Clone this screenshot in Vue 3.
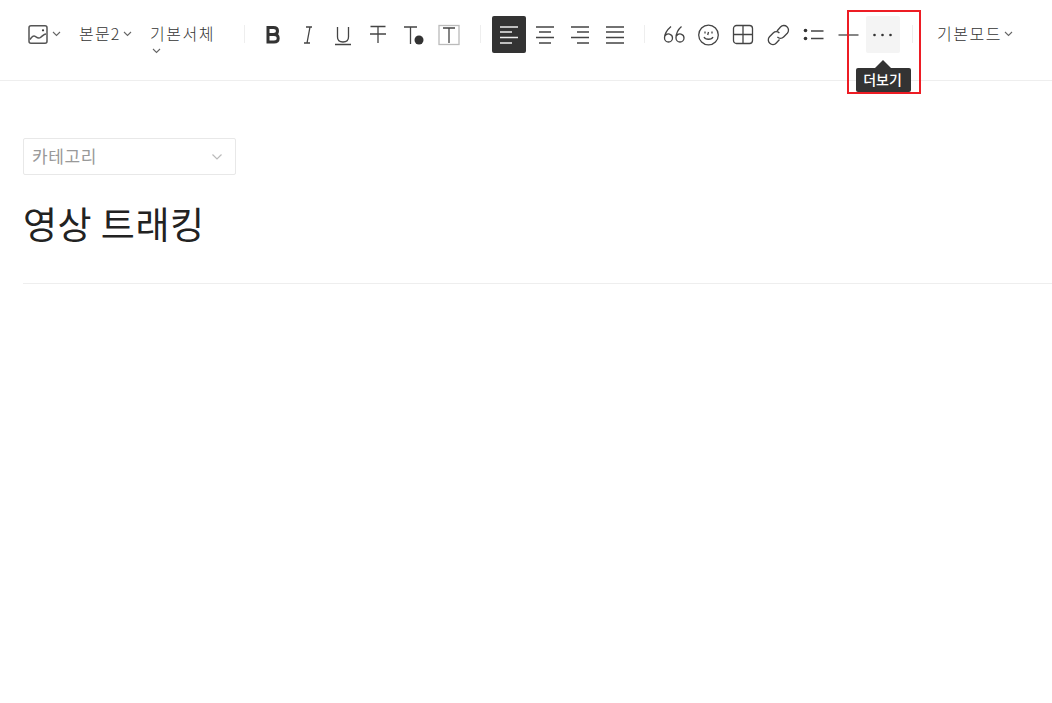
<template>
  <div class="editor">
    <header class="toolbar">
      <button class="drop image-drop">
        <svg class="icon image" width="24" height="24" viewBox="0 0 24 24">
          <rect x="3" y="3.800" width="18" height="17.500" rx="2" />
          <path d="M4 17.500c2-3 3.500-4.500 5.500-3s3 2.500 5 1 3.500-3.500 5.500-3.500" />
          <circle cx="17" cy="8.300" r="1.100" class="solid" />
        </svg>
        <svg class="chev" width="9" height="6" viewBox="0 0 9 6"><path d="M1 1l3.500 3.500L8 1" /></svg>
      </button>
      <button class="drop para-drop">
        <span>본문2</span>
        <svg class="chev" width="9" height="6" viewBox="0 0 9 6"><path d="M1 1l3.500 3.500L8 1" /></svg>
      </button>
      <button class="drop font-drop">
        <span>기본서체</span>
        <svg class="chev wrapped" width="9" height="6" viewBox="0 0 9 6"><path d="M1 1l3.500 3.500L8 1" /></svg>
      </button>
      <i class="divider first"></i>

      <div class="group">
        <button class="tool">
          <svg class="icon bold" width="24" height="24" viewBox="0 0 24 24">
            <path d="M6 4.500h5.500c2.500 0 4 1.300 4 3.600s-1.500 3.500-4 3.500H6zM6 11.600h6c2.600 0 4.200 1.400 4.200 3.700s-1.600 3.700-4.200 3.700H6z" />
          </svg>
        </button>
        <button class="tool">
          <svg class="icon" width="24" height="24" viewBox="0 0 24 24"><path d="M9 4h6M7 20h6M13 4l-3 16" /></svg>
        </button>
        <button class="tool">
          <svg class="icon" width="24" height="24" viewBox="0 0 24 24"><path d="M5.500 4v10c0 3.500 2 5 5.500 5s5.500-1.500 5.500-5V4M3 21.500h16" /></svg>
        </button>
        <button class="tool">
          <svg class="icon" width="24" height="24" viewBox="0 0 24 24"><path d="M3.500 3.500h15M3 11h16M11 3.500V20" /></svg>
        </button>
        <button class="tool">
          <svg class="icon" width="24" height="24" viewBox="0 0 24 24">
            <path d="M2 4h13M8.500 4v17" />
            <circle cx="17" cy="17" r="4.500" class="solid" />
          </svg>
        </button>
        <button class="tool">
          <svg class="icon" width="24" height="24" viewBox="0 0 24 24">
            <rect x="2" y="2.500" width="20" height="19" class="light" />
            <path d="M6 5h12M12 5v15" />
          </svg>
        </button>
      </div>
      <i class="divider second"></i>

      <div class="group">
        <button class="tool active">
          <svg class="icon" width="24" height="24" viewBox="0 0 24 24"><path d="M3 4h18M3 9h12M3 14.500h18M3 20h12" /></svg>
        </button>
        <button class="tool">
          <svg class="icon" width="24" height="24" viewBox="0 0 24 24"><path d="M3 4h18M6 9h12M3 14.500h18M6 20h12" /></svg>
        </button>
        <button class="tool">
          <svg class="icon" width="24" height="24" viewBox="0 0 24 24"><path d="M3 4h18M9 9h12M3 14.500h18M9 20h12" /></svg>
        </button>
        <button class="tool">
          <svg class="icon" width="24" height="24" viewBox="0 0 24 24"><path d="M3 4h18M3 9h18M3 14.500h18M3 20h18" /></svg>
        </button>
      </div>
      <i class="divider"></i>

      <div class="group">
        <button class="tool">
          <svg class="icon" width="24" height="24" viewBox="0 0 24 24">
            <path d="M9 3.500C5.500 6.500 2.500 10 2.500 15a4 4 0 1 0 8 0 4 4 0 0 0-7.500-2M19.500 3.500C16 6.500 14 10 14 15a4 4 0 1 0 8 0 4 4 0 0 0-7.500-2" />
          </svg>
        </button>
        <button class="tool">
          <svg class="icon" width="24" height="24" viewBox="0 0 24 24">
            <circle cx="11.500" cy="12" r="9.800" />
            <path d="M7 14c1.500 3 7.500 3 9 0M8 8.500v2M15 8.500v2M11.500 9l-.8 3" />
          </svg>
        </button>
        <button class="tool">
          <svg class="icon" width="24" height="24" viewBox="0 0 24 24">
            <rect x="1.500" y="2.500" width="19" height="18" rx="3" />
            <path d="M11 2.500v18M1.500 11.500h19" />
          </svg>
        </button>
        <button class="tool">
          <svg class="icon" width="24" height="24" viewBox="0 0 24 24">
            <path d="M10 8l3.500-4a4.600 4.600 0 0 1 6.800 6.200l-3.700 3.800a4.400 4.400 0 0 1-6.200 0" />
            <path d="M12.500 16.500l-3.200 3.500a4.600 4.600 0 0 1-6.800-6.200l3.700-3.800a4.400 4.400 0 0 1 6.200 0" />
          </svg>
        </button>
        <button class="tool">
          <svg class="icon" width="24" height="24" viewBox="0 0 24 24">
            <circle cx="3.500" cy="7.500" r="1.800" class="solid" />
            <circle cx="3.500" cy="15.500" r="1.800" class="solid" />
            <path d="M9 8h12.500M9 15.500h12.500" />
          </svg>
        </button>
        <button class="tool">
          <svg class="icon" width="24" height="24" viewBox="0 0 24 24"><path d="M1.500 12h20" /></svg>
        </button>
        <button class="tool hovered">
          <svg class="icon" width="24" height="24" viewBox="0 0 24 24">
            <circle cx="3.500" cy="12" r="1.300" class="solid" />
            <circle cx="11.500" cy="12" r="1.300" class="solid" />
            <circle cx="19.500" cy="12" r="1.300" class="solid" />
          </svg>
          <span class="tooltip">더보기</span>
        </button>
      </div>
      <i class="divider last"></i>

      <button class="drop mode-drop">
        <span>기본모드</span>
        <svg class="chev" width="9" height="6" viewBox="0 0 9 6"><path d="M1 1l3.500 3.500L8 1" /></svg>
      </button>

      <div class="highlight"></div>
    </header>

    <main class="content">
      <div class="category">
        <span>카테고리</span>
        <svg width="12" height="8" viewBox="0 0 12 8"><path d="M1.500 1.500L6 6l4.500-4.500" /></svg>
      </div>
      <h1 class="title">영상 트래킹</h1>
      <hr class="rule" />
    </main>
  </div>
</template>

<script setup>
</script>

<style>
html,
body {
  background: #fff;
}
</style>

<style scoped>
.editor {
  height: 703px;
  overflow: hidden;
  font-family: "Noto Sans CJK KR", "Liberation Sans", sans-serif;
  color: #333;
}

.toolbar {
  position: relative;
  display: flex;
  align-items: flex-start;
  padding: 16px 0 0 26px;
  height: 64px;
  border-bottom: 1px solid #eee;
}

button {
  border: 0;
  padding: 0;
  background: none;
  font: inherit;
  color: inherit;
}

.drop {
  display: flex;
  align-items: center;
  height: 36px;
  font-size: 16px;
  font-weight: 300;
  letter-spacing: 1.500px;
  color: #333;
}

.drop span {
  margin-bottom: 2px;
}

.image-drop {
  width: 53px;
}

.para-drop {
  width: 71px;
}

.para-drop span {
  letter-spacing: 1.200px;
}

.font-drop {
  position: relative;
  width: 94px;
}

.chev {
  margin-left: 2px;
  fill: none;
  stroke: #666;
  stroke-width: 1.100;
}

.chev.wrapped {
  position: absolute;
  left: 2px;
  top: 32px;
  margin-left: 0;
}

.divider {
  flex: none;
  width: 1px;
  height: 18px;
  margin: 9px 11px 0 12px;
  background: #eee;
}

.divider.first {
  margin-left: 0;
}

.divider.second {
  margin-left: 14px;
}

.divider.last {
  margin-left: 11px;
  margin-right: 24px;
}

.group {
  display: flex;
}

.tool {
  position: relative;
  display: flex;
  align-items: center;
  justify-content: center;
  width: 35px;
  height: 37px;
  border-radius: 2px;
}

.active,
.hovered {
  width: 34px;
  margin-right: 1px;
}

.icon {
  fill: none;
  stroke: #444;
  stroke-width: 1.300;
}

.icon.image {
  stroke: #555;
  stroke-width: 1.500;
}

.icon .solid {
  fill: #333;
  stroke: none;
}

.icon .light {
  stroke: #bbb;
}

.icon.bold {
  stroke: #333;
  stroke-width: 3;
}

.tool.active {
  background: #333;
}

.tool.active .icon {
  stroke: #eee;
  stroke-width: 1.600;
}

.tool.hovered {
  background: #f4f4f4;
}

.tooltip {
  position: absolute;
  left: -10px;
  top: 52px;
  width: 55px;
  height: 24px;
  line-height: 23px;
  padding-right: 2px;
  box-sizing: border-box;
  border-radius: 2px;
  background: #333;
  color: #fff;
  font-size: 14px;
  font-weight: 500;
  text-align: center;
  white-space: nowrap;
}

.tooltip::before {
  content: "";
  position: absolute;
  left: 19px;
  top: -8px;
  border: 8px solid transparent;
  border-top: 0;
  border-bottom-color: #333;
}

.highlight {
  position: absolute;
  left: 847px;
  top: 10px;
  width: 70px;
  height: 80px;
  border: 2px solid #ed1c24;
  pointer-events: none;
}

.content {
  padding: 57px 0 0 23px;
}

.category {
  display: flex;
  align-items: center;
  justify-content: space-between;
  box-sizing: border-box;
  width: 213px;
  height: 37px;
  padding: 0 12px 0 8px;
  border: 1px solid #e8e8e8;
  border-radius: 2px;
  font-size: 17px;
  letter-spacing: .6px;
  color: #999;
}

.category span {
  margin-bottom: 2px;
}

.category svg {
  fill: none;
  stroke: #bbb;
  stroke-width: 1.200;
}

.title {
  margin: 23px 0 0;
  height: 60px;
  line-height: 50px;
  font-size: 37px;
  font-weight: 400;
  letter-spacing: .5px;
  color: #222;
}

.rule {
  margin: 25px 0 0;
  border: 0;
  border-top: 1px solid #eee;
}
</style>
